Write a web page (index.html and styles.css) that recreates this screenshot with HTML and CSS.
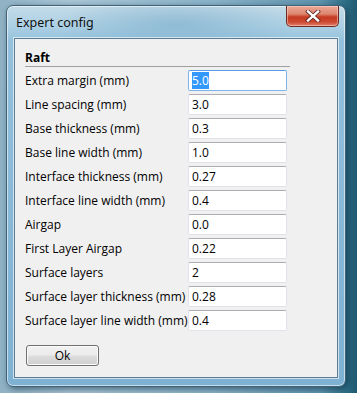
FILE: index.html
```html
<!DOCTYPE html>
<html>
<head>
<meta charset="utf-8">
<link rel="stylesheet" href="styles.css">
</head>
<body>
<div class="desktop">
  <div class="window">
    <div class="titlebar">
      <span class="title">Expert config</span>
      <div class="close">
        <svg width="16" height="12" viewBox="0 0 16 12"><path d="M3 1.5 L13 10.5 M13 1.5 L3 10.5" stroke="#5a2520" stroke-width="4" stroke-linecap="square"/><path d="M3 1.5 L13 10.5 M13 1.5 L3 10.5" stroke="#ffffff" stroke-width="2.4" stroke-linecap="square"/></svg>
      </div>
    </div>
    <div class="client">
      <div class="section">Raft</div>
      <div class="sep"></div>
      <div class="form">
        <label>Extra margin (mm)</label><div class="input focus"><span class="sel">5.0</span></div>
        <label>Line spacing (mm)</label><div class="input">3.0</div>
        <label>Base thickness (mm)</label><div class="input">0.3</div>
        <label>Base line width (mm)</label><div class="input">1.0</div>
        <label>Interface thickness (mm)</label><div class="input">0.27</div>
        <label>Interface line width (mm)</label><div class="input">0.4</div>
        <label>Airgap</label><div class="input">0.0</div>
        <label>First Layer Airgap</label><div class="input">0.22</div>
        <label>Surface layers</label><div class="input">2</div>
        <label>Surface layer thickness (mm)</label><div class="input">0.28</div>
        <label>Surface layer line width (mm)</label><div class="input">0.4</div>
      </div>
      <div class="buttons"><button class="btn">Ok</button></div>
    </div>
  </div>
</div>
</body>
</html>
```
FILE: styles.css
```css
* { box-sizing: border-box; }
html, body { margin: 0; padding: 0; }
body {
  width: 357px;
  height: 393px;
  overflow: hidden;
  font-family: "Open Sans", "Noto Sans", sans-serif;
  font-size: 12px;
  color: #000;
}
.desktop {
  width: 357px;
  height: 393px;
  padding: 5px 0 0 6px;
  background: linear-gradient(90deg, #8fb2c4 0%, #a9c6d6 20%, #8ab3c9 60%, #5e93ad 90%, #2d6e86 97%, #1f5a70 100%);
}
.window {
  width: 340px;
  height: 382px;
  border: 1px solid #3f6378;
  border-radius: 7px;
  background:
    radial-gradient(ellipse 120px 30px at 170px 18px, rgba(120,170,200,0.55), rgba(120,170,200,0) 100%),
    linear-gradient(180deg, #c4dbe8 0px, #acd0e4 20px, #94c0dc 36px, #7fb1d2 100%);
  padding: 0 7px 8px 7px;
  box-shadow: 2px 2px 6px rgba(10,40,60,0.6), inset 0 0 0 1px rgba(255,255,255,0.55);
  display: flex;
  flex-direction: column;
}
.titlebar {
  height: 32px;
  display: flex;
  align-items: flex-start;
  justify-content: space-between;
  flex: none;
}
.title {
  margin-top: 8px;
  margin-left: 2px;
  font-family: "Noto Sans", "Open Sans", sans-serif;
  font-size: 12.5px;
  color: #111;
}
.close {
  width: 53px;
  height: 21px;
  margin-right: -1px;
  border: 1px solid #6b2a22;
  border-top: none;
  border-radius: 0 0 5px 5px;
  background: linear-gradient(180deg, #eba896 0%, #de8670 40%, #c53a22 55%, #cc4a30 80%, #e2806a 100%);
  box-shadow: inset 0 0 0 1px rgba(255,220,210,0.5);
  display: flex;
  align-items: center;
  justify-content: center;
}
.client {
  flex: 1;
  border: 1px solid #5e7e94;
  background: #f0f0f0;
  box-shadow: 0 0 0 1px rgba(255,255,255,0.6);
  padding: 11px 0 0 10px;
  display: flex;
  flex-direction: column;
}
.section {
  font-weight: bold;
  height: 16px;
  line-height: 16px;
}
.sep {
  width: 265px;
  height: 1px;
  background: #a0a0a0;
  margin: 0 0 3px 0;
}
.form {
  display: grid;
  grid-template-columns: 163px 99px;
  row-gap: 3px;
  align-items: center;
}
.input {
  height: 21px;
  border: 1px solid #e2e3ea;
  border-top-color: #abadb3;
  border-radius: 2px;
  background: #fff;
  padding: 0 3px;
  line-height: 19px;
  white-space: nowrap;
}
.input.focus {
  border-color: #7eb4ea;
  border-top-color: #569de5;
}
.sel {
  background: #3399ff;
  color: #fff;
}
.buttons {
  margin-top: 14px;
  padding-left: 1px;
}
.btn {
  width: 73px;
  height: 21px;
  font-family: inherit;
  font-size: 12px;
  border: 1px solid #707070;
  border-radius: 3px;
  background: linear-gradient(180deg, #f2f2f2 0%, #ebebeb 48%, #dddddd 52%, #cfcfcf 100%);
  box-shadow: inset 0 0 0 1px #fbfbfb;
  padding: 0;
  color: #000;
}
```
